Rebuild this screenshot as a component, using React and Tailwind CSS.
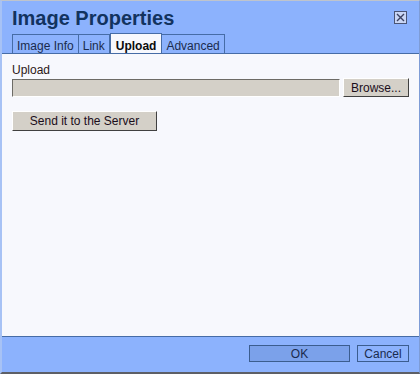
import React from 'react';

const tabs = ['Image Info', 'Link', 'Upload', 'Advanced'];

function Tab({ label, active }) {
  if (active) {
    return (
      <div className="-mb-px h-[21px] border border-b-0 border-[#466ca6] bg-[#f7f8fd] px-[5px] pt-[3px] text-[12px] font-bold text-[#0b0b0b]">
        {label}
      </div>
    );
  }
  return (
    <div className="mt-px h-[19px] border border-b-0 border-[#466ca6] bg-[#8cb2fd] px-[4px] pt-[2px] text-[12px] text-[#1a2b4d] -ml-px first:ml-0">
      {label}
    </div>
  );
}

export default function App() {
  return (
    <div
      className="flex h-[374px] w-[420px] flex-col border-t border-t-[#bfc4cc] border-l-2 border-l-[#a7c2f5] border-r border-r-[#7e9cd6] border-b-2 border-b-[#5d5f66] bg-[#8cb2fd]"
      style={{ fontFamily: '"Liberation Sans", Arial, sans-serif' }}
    >
      {/* header */}
      <div className="flex items-start justify-between pl-[10px] pr-[12px] pt-[5px]">
        <h1 className="text-[20px] font-bold leading-[24px] text-[#12335f]">Image Properties</h1>
        <div className="mt-[5px] flex h-[13px] w-[13px] items-center justify-center border border-[#4a5575] bg-[#c9d6f5]">
          <svg width="9" height="9" viewBox="0 0 9 9">
            <path d="M1 1L8 8M8 1L1 8" stroke="#3b4160" strokeWidth="1.4" />
          </svg>
        </div>
      </div>

      {/* tabs */}
      <div className="mt-[3px] flex items-end pl-[10px]">
        {tabs.map((t) => (
          <Tab key={t} label={t} active={t === 'Upload'} />
        ))}
      </div>

      {/* content */}
      <div className="flex-1 border-t border-b border-[#466ca6] bg-[#f7f8fd] px-[10px] pt-[9px] text-[12px] text-[#2b1717]">
        <div className="leading-[14px]">Upload</div>
        <div className="mt-[1px] flex items-center gap-[3px]">
          <div className="h-[18px] flex-1 border-t border-l border-t-[#6d6b66] border-l-[#6d6b66] border-b border-r border-b-white border-r-white bg-[#d4d0c8]" />
          <button className="h-[19px] w-[66px] border-t border-l border-t-white border-l-white border-b border-r border-b-[#404040] border-r-[#404040] bg-[#d4d0c8] text-[12px] leading-[16px] text-[#1a0d1a]">
            Browse...
          </button>
        </div>
        <button className="mt-[14px] h-[20px] w-[145px] border-t border-l border-t-white border-l-white border-b border-r border-b-[#404040] border-r-[#404040] bg-[#d4d0c8] text-[12px] leading-[16px] text-[#1a0d1a]">
          Send it to the Server
        </button>
      </div>

      {/* footer */}
      <div className="flex h-[35px] items-start justify-end gap-[7px] pr-[10px] pt-[8px]">
        <button className="h-[17px] w-[101px] border border-[#3b5d8f] bg-[#7ba1ea] text-[12px] leading-[14px] text-[#1a2b4d]">
          OK
        </button>
        <button className="h-[17px] w-[52px] border border-[#3b5d8f] bg-[#8cb2fd] text-[12px] leading-[14px] text-[#1a2b4d]">
          Cancel
        </button>
      </div>
    </div>
  );
}
